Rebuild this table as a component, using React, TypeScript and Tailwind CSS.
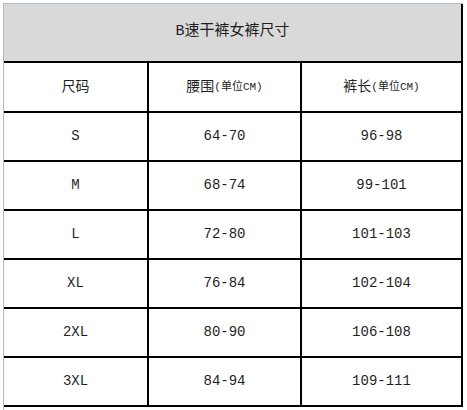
import React from "react";

const rows = [
  ["S", "64-70", "96-98"],
  ["M", "68-74", "99-101"],
  ["L", "72-80", "101-103"],
  ["XL", "76-84", "102-104"],
  ["2XL", "80-90", "106-108"],
  ["3XL", "84-94", "109-111"],
];

const font = { fontFamily: '"Liberation Mono", "Noto Sans CJK SC", monospace' };

export default function App() {
  return (
    <div className="w-[467px] h-[410px] bg-white pl-[3px] pt-[3px] text-[#1f1f1f]" style={font}>
      <div className="w-[460px] h-[407px] border-l border-t border-[#b4bcc8]">
        <div className="w-[459px] h-[57px] bg-[#d9d9d9] border-r-2 border-black flex items-center justify-center text-[15px]">
          B速干裤女裤尺寸
        </div>
        <div className="flex w-[459px] h-[50px] border-t-2 border-black">
          <div className="w-[143px] flex items-center justify-center text-[14px]">尺码</div>
          <div className="w-[153px] border-l-2 border-black flex items-center justify-center text-[14px]">
            腰围<span className="text-[11px]">(单位CM)</span>
          </div>
          <div className="w-[163px] border-l-2 border-r-2 border-black flex items-center justify-center text-[14px]">
            裤长<span className="text-[11px]">(单位CM)</span>
          </div>
        </div>
        {rows.map((r, i) => (
          <div
            key={r[0]}
            className={`flex w-[459px] h-[49px] border-t-2 border-black text-[14px] ${i === rows.length - 1 ? "h-[51px] border-b-2" : ""}`}
          >
            <div className="w-[143px] flex items-center justify-center">{r[0]}</div>
            <div className="w-[153px] border-l-2 border-black flex items-center justify-center">{r[1]}</div>
            <div className="w-[163px] border-l-2 border-r-2 border-black flex items-center justify-center">{r[2]}</div>
          </div>
        ))}
      </div>
    </div>
  );
}
